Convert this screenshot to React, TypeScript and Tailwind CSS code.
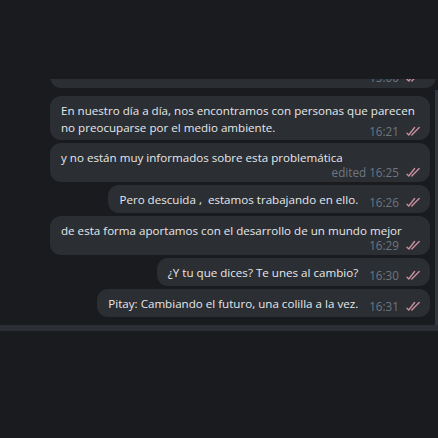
import React from 'react';

type Msg = {
  lines: string[];
  time: string;
  edited?: boolean;
  wide?: boolean;
  inlineTime?: boolean;
};

const messages: Msg[] = [
  { lines: ['En nuestro día a día, nos encontramos con personas que parecen', 'no preocuparse por el medio ambiente.'], time: '16:21', wide: true, inlineTime: true },
  { lines: ['y no están muy informados sobre esta problemática'], time: '16:25', edited: true, wide: true },
  { lines: ['Pero descuida ,  estamos trabajando en ello.'], time: '16:26' },
  { lines: ['de esta forma aportamos con el desarrollo de un mundo mejor'], time: '16:29', wide: true },
  { lines: ['¿Y tu que dices? Te unes al cambio?'], time: '16:30' },
  { lines: ['Pitay: Cambiando el futuro, una colilla a la vez.'], time: '16:31' },
];

function Checks() {
  return (
    <svg width="16" height="10" viewBox="0 0 16 10" fill="none" className="shrink-0">
      <path d="M1 7.2L2.8 9L8.6 1.5" stroke="#c98f9c" strokeWidth="1.4" strokeLinecap="round" strokeLinejoin="round" />
      <path d="M5.8 9L13.2 1.5" stroke="#c98f9c" strokeWidth="1.4" strokeLinecap="round" />
    </svg>
  );
}

function Meta({ m }: { m: Msg }) {
  return (
    <div className="flex items-center gap-[7px] text-[11.7px] leading-[16px] text-[#6c7782]">
      <span>{m.edited ? `edited ${m.time}` : m.time}</span>
      <Checks />
    </div>
  );
}

function Bubble({ m }: { m: Msg }) {
  if (m.wide) {
    return (
      <div className="relative self-stretch ml-[50px] rounded-[11px] bg-[#2b2e33] pl-[11px] pr-[8px] pt-[6px] pb-[2px]">
        {m.lines.map((l, i) => (
          <div key={i} className="whitespace-pre text-[11.6px] leading-[17px] text-[#e6e8ea]">{l}</div>
        ))}
        {m.inlineTime ? (
          <div className="absolute right-[8px] bottom-[1px]">
            <Meta m={m} />
          </div>
        ) : (
          <div className="-mt-[2px] flex justify-end">
            <Meta m={m} />
          </div>
        )}
        {m.inlineTime && <div className="h-[2px]" />}
      </div>
    );
  }
  return (
    <div className="self-end flex items-center rounded-[11px] bg-[#2b2e33] pl-[11px] pr-[8px] h-[28px]">
      <span className="whitespace-pre text-[11.6px] leading-[17px] text-[#e6e8ea]">{m.lines[0]}</span>
      <div className="ml-[11px] mt-[5px]">
        <Meta m={m} />
      </div>
    </div>
  );
}

export default function App() {
  return (
    <div className="w-[438px] h-[438px] bg-[#1a1b1f] flex flex-col overflow-hidden" style={{ fontFamily: '"Open Sans", "Noto Sans", sans-serif' }}>
      <div className="h-[79px] shrink-0" />
      <div className="flex h-[246px] shrink-0">
        <div className="flex-1 flex flex-col gap-[3px] pr-[5px]">
          <div className="h-[9px] overflow-hidden flex flex-col justify-end ml-[50px] -mr-[6px] mb-[5px]">
            <div className="h-[28px] shrink-0 rounded-[11px] bg-[#2b2e33] flex items-center justify-end pr-[14px]">
              <div className="mt-[5px]">
                <Meta m={{ lines: [], time: '15:00' }} />
              </div>
            </div>
          </div>
          {messages.map((m, i) => (
            <Bubble key={i} m={m} />
          ))}
        </div>
        <div className="w-[3px] mt-[11px] bg-[#33373d]" />
      </div>
      <div className="h-[6px] bg-[#2b2f35] shrink-0" />
      <div className="flex-1" />
    </div>
  );
}
